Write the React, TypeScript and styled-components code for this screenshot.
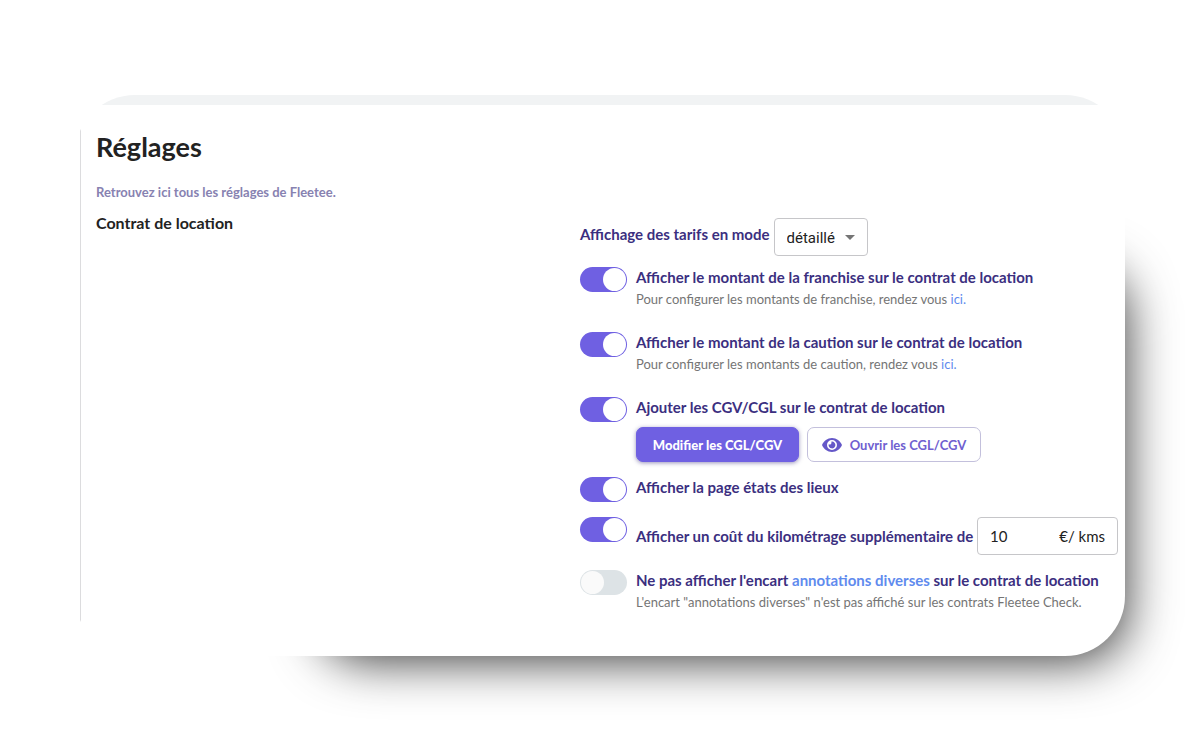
import React, { useState } from "react";
import styled, { createGlobalStyle } from "styled-components";

const GlobalStyle = createGlobalStyle`
  *, *::before, *::after { box-sizing: border-box; }
  body {
    margin: 0;
    background: #fff;
    font-family: Lato, "Liberation Sans", sans-serif;
    color: #222;
  }
`;

const Page = styled.main`
  isolation: isolate;
  padding: 95px 75px 94px;
  overflow: hidden;
`;

const CardFrame = styled.div`
  position: relative;

  &::before {
    content: "";
    position: absolute;
    z-index: -1;
    inset: 184px 12px 8px 256px;
    border-radius: 36px;
    box-shadow: 0 0 50px 12px rgba(0, 0, 0, 0.8);
  }
`;

const Card = styled.div`
  overflow: hidden;
  border-radius: 60px;
  background: #fff;
`;

const TopStrip = styled.div`
  height: 10px;
  background: #f1f3f4;
`;

const Panel = styled.div`
  margin-left: 5px;
  padding: 26px 7px 44px 15px;
  border-left: 1px solid #dcdcde;
`;

const Title = styled.h1`
  margin: 0;
  font-size: 27px;
  line-height: 32px;
  font-weight: 700;
`;

const Intro = styled.p`
  margin: 19px 0 0;
  font-size: 13px;
  line-height: 20px;
  font-weight: 700;
  color: #8782b1;
`;

const Section = styled.section`
  display: grid;
  grid-template-columns: minmax(0, 484fr) minmax(0, 538fr);
  margin-top: 10px;
`;

const SectionTitle = styled.h2`
  margin: 0;
  font-size: 16px;
  line-height: 22px;
  font-weight: 700;
`;

const Settings = styled.div`
  display: flex;
  flex-direction: column;
  gap: 15px;
  padding-top: 6px;
`;

const ModeRow = styled.div`
  display: flex;
  align-items: center;
  gap: 4px;
  margin-bottom: -4px;
`;

const Label = styled.label`
  display: block;
  font-size: 15px;
  line-height: 20px;
  font-weight: 700;
  color: #3b2f80;
  white-space: nowrap;
`;

const ModeLabel = styled(Label)`
  padding-bottom: 6px;
`;

const SelectBox = styled.div`
  display: grid;
  align-items: center;
  width: 94px;
  height: 38px;

  > * { grid-area: 1 / 1; }
`;

const Select = styled.select`
  width: 100%;
  height: 100%;
  appearance: none;
  padding: 2px 24px 0 12px;
  border: 1px solid #c6c6c9;
  border-radius: 4px;
  background: #fff;
  font-family: Roboto, sans-serif;
  font-size: 15px;
  color: #222;
`;

const Caret = styled.svg`
  justify-self: end;
  margin-right: 13px;
  width: 10px;
  height: 5px;
  fill: #757575;
  pointer-events: none;
`;

const Row = styled.div<{ $roomy?: boolean }>`
  display: flex;
  align-items: flex-start;
  gap: 9px;
  min-height: 25px;
  padding-bottom: ${(p) => (p.$roomy ? 8 : 0)}px;
`;

const Toggle = styled.input`
  appearance: none;
  flex: none;
  width: 47px;
  height: 25px;
  margin: 0;
  padding: 1px;
  border-radius: 13px;
  background: #dde3e6;
  cursor: pointer;

  &::before {
    content: "";
    display: block;
    width: 23px;
    height: 23px;
    border-radius: 50%;
    background: #fafafa;
  }

  &:checked { background: #6f60e2; }
  &:checked::before {
    margin-left: 22px;
    background: #fff;
  }
`;

const RowBody = styled.div`
  flex: 1;
  min-width: 0;
`;

const Help = styled.p`
  margin: 2px 0 0;
  font-size: 13px;
  line-height: 20px;
  color: #757575;
  white-space: nowrap;
`;

const Link = styled.a`
  color: #5f8bee;
  text-decoration: none;
`;

const Actions = styled.div`
  display: flex;
  gap: 8px;
  margin-top: 10px;
`;

const Button = styled.button<{ $primary?: boolean }>`
  display: flex;
  align-items: center;
  justify-content: center;
  gap: 8px;
  height: 35px;
  min-width: ${(p) => (p.$primary ? 163 : 174)}px;
  padding: 0 10px;
  border: 1px solid ${(p) => (p.$primary ? "#6f60e2" : "#c3c0dc")};
  border-radius: 7px;
  background: ${(p) => (p.$primary ? "#6f60e2" : "#fff")};
  box-shadow: ${(p) => (p.$primary ? "0 1px 4px rgba(50, 40, 120, 0.5)" : "none")};
  font-family: inherit;
  font-size: 13px;
  font-weight: ${(p) => (p.$primary ? 900 : 700)};
  color: ${(p) => (p.$primary ? "#fff" : "#6f60d0")};
  white-space: nowrap;
  cursor: pointer;
`;

const CostLine = styled.div`
  display: flex;
  align-items: center;
  justify-content: space-between;
`;

const CostField = styled.div`
  display: flex;
  align-items: center;
  justify-content: space-between;
  width: 141px;
  height: 38px;
  padding: 0 12px;
  border: 1px solid #c6c6c9;
  border-radius: 4px;
  font-size: 15px;
  line-height: 20px;
`;

const CostInput = styled.input`
  width: 60px;
  height: 20px;
  padding: 0;
  border: 0;
  outline: 0;
  background: transparent;
  font-family: inherit;
  font-size: 15px;
  color: #222;
`;

function EyeIcon() {
  return (
    <svg width="20" height="14" viewBox="0 0 20 14" aria-hidden="true">
      <path
        fill="#6558c8"
        fillRule="evenodd"
        d="M10 0C5.500 0 1.700 2.900 0 7c1.700 4.100 5.500 7 10 7s8.300-2.900 10-7C18.300 2.900 14.500 0 10 0ZM10 2a5 5 0 1 1 0 10 5 5 0 0 1 0-10Z"
      />
      <path fill="#6558c8" d="M10 3.600a3.400 3.400 0 1 1-3.300 2.600 1.800 1.800 0 0 0 2.500-2.500q.4-.1.800-.1Z" />
    </svg>
  );
}

interface SettingProps {
  id: string;
  label: React.ReactNode;
  help?: React.ReactNode;
  roomy?: boolean;
  initial?: boolean;
  children?: React.ReactNode;
}

function Setting({ id, label, help, roomy, initial = true, children }: SettingProps) {
  const [on, setOn] = useState(initial);
  return (
    <Row $roomy={roomy}>
      <Toggle type="checkbox" role="switch" id={id} checked={on} onChange={() => setOn(!on)} />
      <RowBody>
        <Label htmlFor={id}>{label}</Label>
        {help && <Help>{help}</Help>}
        {children}
      </RowBody>
    </Row>
  );
}

function CostSetting() {
  const [on, setOn] = useState(true);
  const [cost, setCost] = useState("10");
  return (
    <Row>
      <Toggle type="checkbox" role="switch" id="km" checked={on} onChange={() => setOn(!on)} />
      <RowBody>
        <CostLine>
          <Label htmlFor="km">Afficher un coût du kilométrage supplémentaire de</Label>
          <CostField>
            <CostInput
              aria-label="Coût du kilomètre supplémentaire"
              value={cost}
              onChange={(e) => setCost(e.target.value)}
            />
            <span>€/&nbsp;kms</span>
          </CostField>
        </CostLine>
      </RowBody>
    </Row>
  );
}

export default function App() {
  return (
    <Page>
      <GlobalStyle />
      <CardFrame>
        <Card>
          <TopStrip />
          <Panel>
            <Title>Réglages</Title>
            <Intro>Retrouvez ici tous les réglages de Fleetee.</Intro>
            <Section>
              <SectionTitle>Contrat de location</SectionTitle>
              <Settings>
                <ModeRow>
                  <ModeLabel htmlFor="mode">Affichage des tarifs en mode</ModeLabel>
                  <SelectBox>
                    <Select id="mode" defaultValue="détaillé">
                      <option>détaillé</option>
                      <option>simple</option>
                    </Select>
                    <Caret viewBox="0 0 10 5" aria-hidden="true">
                      <path d="M0 0h10L5 5Z" />
                    </Caret>
                  </SelectBox>
                </ModeRow>
                <Setting
                  id="franchise"
                  roomy
                  label="Afficher le montant de la franchise sur le contrat de location"
                  help={<>Pour configurer les montants de franchise, rendez vous <Link href="#franchise">ici.</Link></>}
                />
                <Setting
                  id="caution"
                  roomy
                  label="Afficher le montant de la caution sur le contrat de location"
                  help={<>Pour configurer les montants de caution, rendez vous <Link href="#caution">ici.</Link></>}
                />
                <Setting id="cgv" label="Ajouter les CGV/CGL sur le contrat de location">
                  <Actions>
                    <Button type="button" $primary>Modifier les CGL/CGV</Button>
                    <Button type="button">
                      <EyeIcon />
                      Ouvrir les CGL/CGV
                    </Button>
                  </Actions>
                </Setting>
                <Setting id="etats" label="Afficher la page états des lieux" />
                <CostSetting />
                <Setting
                  id="annotations"
                  initial={false}
                  label={<>Ne pas afficher l'encart <Link href="#annotations">annotations diverses</Link> sur le contrat de location</>}
                  help={`L'encart "annotations diverses" n'est pas affiché sur les contrats Fleetee Check.`}
                />
              </Settings>
            </Section>
          </Panel>
        </Card>
      </CardFrame>
    </Page>
  );
}
